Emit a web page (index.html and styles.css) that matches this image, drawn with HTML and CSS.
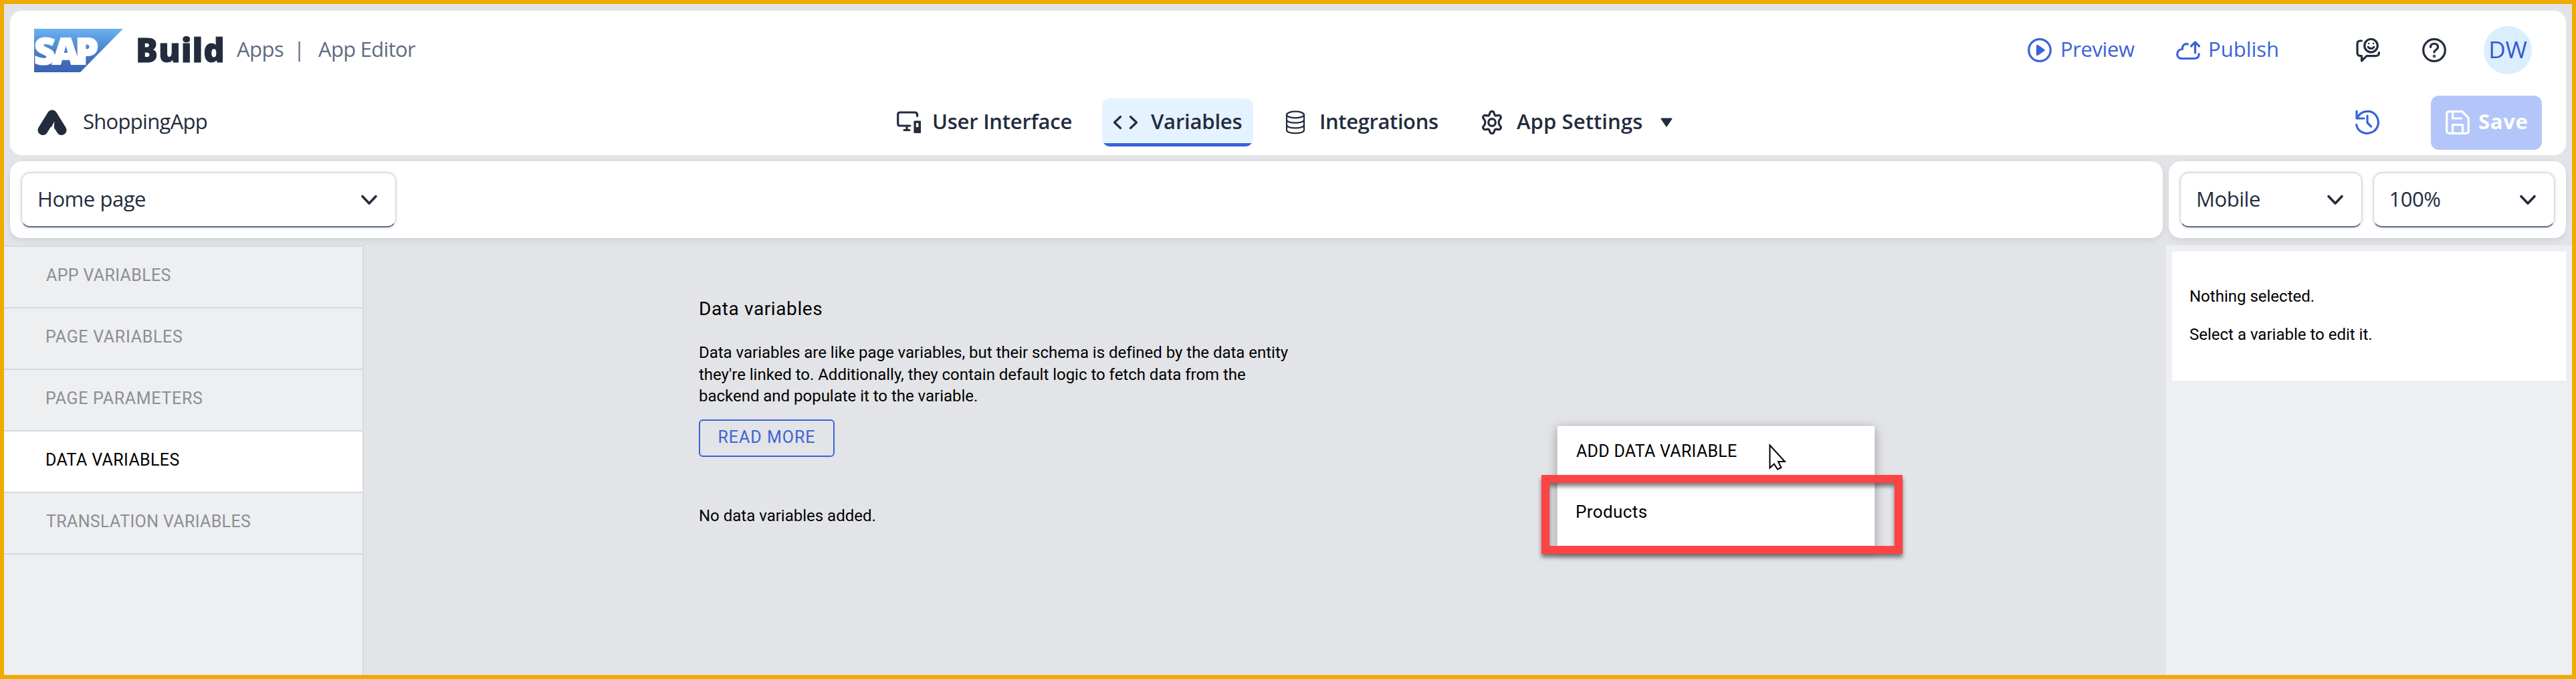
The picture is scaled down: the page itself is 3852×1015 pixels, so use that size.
FILE: index.html
```html
<!DOCTYPE html>
<html lang="en">
<head>
<meta charset="utf-8">
<title>ShoppingApp - App Editor</title>
<link rel="stylesheet" href="styles.css">
</head>
<body>
<div class="app">
  <header class="header">
    <div class="shell-row">
      <svg class="logo" viewBox="0 0 133 65">
        <defs><linearGradient id="sap" x1="0" y1="0" x2="0" y2="1"><stop offset="0" stop-color="#6cb2f2"/><stop offset=".35" stop-color="#5390d8"/><stop offset=".75" stop-color="#426dbb"/><stop offset="1" stop-color="#3c64b4"/></linearGradient></defs>
        <path d="M0 0h133L69 65H0z" fill="url(#sap)"/>
        <text class="logo-text" y="52.5"><tspan x="0">S</tspan><tspan x="27.500">A</tspan><tspan x="61.500">P</tspan></text>
      </svg>
      <span class="product">Build</span>
      <span class="crumb crumb-apps">Apps</span>
      <span class="crumb crumb-sep">|</span>
      <span class="crumb crumb-editor">App Editor</span>
      <div class="shell-actions">
        <a class="link preview">
          <svg class="icon" viewBox="0 0 36 36"><circle cx="18" cy="18" r="16.3"/><path class="solid" d="M14.5 11.5v13l9.5-6.5z"/></svg>
          <span>Preview</span>
        </a>
        <a class="link publish">
          <svg class="icon" viewBox="0 0 36 36"><path d="M17.5 9c-5-1.500-8.500 2-8 7.500C4.500 17 1.700 20 1.700 24s3 6.500 6.500 6.500h19c4.500 0 7-2.500 7-7M28.500 22V7M22.500 12l6-6 6 6"/></svg>
          <span>Publish</span>
        </a>
        <svg class="icon feedback" viewBox="0 0 36 36"><path d="M8.500 4H6.500C3.500 4 2 6 2 8.500v13C2 25 3.500 26.500 6.500 26.500h2V34l7.500-7.300h13c3.500 0 5.500-1.500 5.500-5"/><circle cx="22.500" cy="11.300" r="9.800"/><path d="M18.200 13.200c1.500 3.200 7.100 3.200 8.600 0" class="smile"/><circle class="dot" cx="19" cy="8" r="1.200"/><circle class="dot" cx="26" cy="8" r="1.200"/></svg>
        <svg class="icon help" viewBox="0 0 36 36"><circle cx="18" cy="18" r="16.300"/><path d="M12.500 13.500c0-7 11-7 11 0 0 4-5.500 4-5.500 7.500"/><circle class="solid" cx="18" cy="27" r=".7"/></svg>
        <span class="avatar">DW</span>
      </div>
    </div>
    <div class="app-row">
      <div class="app-name">
        <svg class="app-mark" viewBox="0 0 44 38"><path d="M8 30.500 22 8 36 30.500M22 8l4 13" fill="none" stroke="#232c3d" stroke-width="15" stroke-linecap="round" stroke-linejoin="round"/><path d="M25.500 17.500 15 36l6 2h6l1-2c-3.500-6-3.500-12-2.500-18.500z" fill="#fff"/></svg>
        <span>ShoppingApp</span>
      </div>
      <nav class="tabs">
        <a class="tab tab-ui">
          <svg class="icon" viewBox="0 0 36 36"><path d="M30.500 8.500V6.500C30.500 4 29.500 3 27 3H5C2.800 3 1.700 4 1.700 6v14c0 2 1 3 3 3H20M15 23v6M11 29.500h8"/><path class="solid" d="M27 17h7.500v15.500H27z"/><path d="M28.800 19h3.600v6h-3.600z" fill="#fff" stroke="none"/></svg>
          <span>User Interface</span>
        </a>
        <a class="tab tab-variables active">
          <svg class="icon" viewBox="0 0 36 36"><path d="M10.500 9.500 1.500 18l9 8.500M25.500 9.500l9 8.500-9 8.500"/></svg>
          <span>Variables</span>
        </a>
        <a class="tab tab-integrations">
          <svg class="icon thin" viewBox="0 0 36 36"><ellipse cx="18" cy="6.500" rx="13" ry="4.800"/><path d="M5 6.500v23c0 6.200 26 6.200 26 0v-23M5 14c0 6.200 26 6.200 26 0M5 21.700c0 6.200 26 6.200 26 0"/></svg>
          <span>Integrations</span>
        </a>
        <a class="tab tab-settings">
          <svg class="icon" viewBox="0 0 36 36"><path d="M15.300 3c.8-2 4.600-2 5.400 0l1.200 3.200c.4 1.200 1.700 1.900 3 1.700l3.100-.6c2.300-.4 4.300 2.800 2.900 4.600l-2.100 3c-.8 1.300-.8 4.900 0 6.200l2.100 3c1.400 1.800-.6 5-2.900 4.600l-3.100-.6c-1.300-.2-2.600.5-3 1.700L20.700 33c-.8 2-4.600 2-5.400 0l-1.200-3.200c-.4-1.200-1.700-1.900-3-1.700l-3.100.6c-2.300.4-4.300-2.800-2.900-4.600l2.100-3c.8-1.300.8-4.900 0-6.200l-2.100-3c-1.400-1.800.6-5 2.900-4.600l3.100.6c1.300.2 2.600-.5 3-1.700z"/><circle cx="18" cy="18" r="5.300"/></svg>
          <span>App Settings</span>
          <svg class="caret" viewBox="0 0 18 14"><path d="M1.500 1.500h15L9 12.500z" fill="#232c3d" stroke="#232c3d" stroke-width="2" stroke-linejoin="round"/></svg>
        </a>
      </nav>
      <svg class="icon history" viewBox="0 0 36 36"><path d="M2 1v11h11M2.500 12C8 0 23-2 30.500 7c6 8 5 18-2.500 24C17.500 38 3.500 33 1.700 21.500M18 8v10.500l5.500 5.500"/></svg>
      <button class="save">
        <svg class="icon" viewBox="0 0 36 36"><path d="M6 1.700h18.500L34.300 11.500V30c0 3-1.500 4.300-4.300 4.300H6C3 34.300 1.700 33 1.700 30V6C1.700 3 3 1.700 6 1.700zM10.500 2v10h13M10.500 34V21.500h15V34"/></svg>
        <span>Save</span>
      </button>
    </div>
  </header>

  <div class="toolbars">
    <div class="bar bar-page">
      <div class="select"><span>Home page</span><svg class="chevron" viewBox="0 0 24 16"><path d="M2 2.500 12 13 22 2.500"/></svg></div>
    </div>
    <div class="bar bar-view">
      <div class="select"><span>Mobile</span><svg class="chevron" viewBox="0 0 24 16"><path d="M2 2.500 12 13 22 2.500"/></svg></div>
      <div class="select"><span>100%</span><svg class="chevron" viewBox="0 0 24 16"><path d="M2 2.500 12 13 22 2.500"/></svg></div>
    </div>
  </div>

  <div class="workspace">
    <aside class="sidebar">
      <a class="side-item s-app">APP VARIABLES</a>
      <a class="side-item s-page">PAGE VARIABLES</a>
      <a class="side-item s-params">PAGE PARAMETERS</a>
      <a class="side-item s-data current">DATA VARIABLES</a>
      <a class="side-item s-trans">TRANSLATION VARIABLES</a>
    </aside>
    <main class="content">
      <h1>Data variables</h1>
      <p class="intro">Data variables are like page variables, but their schema is defined by the data entity<br>they're linked to. Additionally, they contain default logic to fetch data from the<br>backend and populate it to the variable.</p>
      <button class="read-more">READ MORE</button>
      <p class="empty">No data variables added.</p>
    </main>
    <aside class="inspector">
      <div class="inspector-card">
        <p>Nothing selected.</p>
        <p>Select a variable to edit it.</p>
      </div>
    </aside>
  </div>

  <div class="menu">
    <div class="menu-title">ADD DATA VARIABLE</div>
    <div class="menu-item">Products</div>
  </div>
  <div class="highlight"></div>
  <svg class="cursor" viewBox="0 0 26 42"><path d="M1.500 2.500v34l6.500-6 5 8 5.500-2.500-4.500-9h10z" fill="#fff" stroke="#000" stroke-width="2"/></svg>
</div>
</body>
</html>
```

FILE: styles.css
```css
* { box-sizing: border-box; }

body {
  margin: 0;
  font-family: Roboto, "Liberation Sans", sans-serif;
  font-size: 24px;
  color: #000;
}

.app {
  position: relative;
  display: flex;
  flex-direction: column;
  width: 3852px;
  height: 1015px;
  padding-top: 10px;
  border: 6px solid #f0ab00;
  background: #e3e4e8;
  overflow: hidden;
  white-space: nowrap;
}

/* Header */
.header {
  flex: none;
  height: 216px;
  margin: 0 9px;
  border-radius: 18px;
  background: #fff;
  font-family: "Open Sans", "Liberation Sans", sans-serif;
  font-size: 31px;
  line-height: 42px;
  color: #232c3d;
}

.shell-row {
  display: flex;
  align-items: center;
  height: 118px;
  padding: 0 51px 0 36px;
}

.logo { width: 133px; height: 65px; overflow: visible; }
.logo-text {
  font-size: 55px;
  font-weight: 800;
  fill: #fff;
  stroke: #fff;
  stroke-width: 2px;
}
.product {
  width: 149px;
  margin-left: 19px;
  padding-bottom: 3px;
  font-size: 49px;
  font-weight: 800;
  letter-spacing: .9px;
  -webkit-text-stroke: 1px #232c3d;
}
.crumb { padding-bottom: 4px; color: #5f6b80; }
.crumb-apps { width: 88px; margin-left: 2px; letter-spacing: -.5px; }
.crumb-sep { width: 34px; padding-left: 0; margin-left: -3px; margin-right: 3px; }
.crumb-editor { letter-spacing: -.7px; }

.shell-actions { display: flex; align-items: center; margin-left: auto; }
.link { display: flex; align-items: center; color: #3a63d8; }
.link span { padding-bottom: 4px; }
.preview { width: 222px; gap: 13px; letter-spacing: -.4px; }
.publish { width: 269px; gap: 12px; }
.help { margin-left: 63px; }
.avatar {
  width: 72px;
  height: 72px;
  margin-left: 56px;
  border-radius: 50%;
  background: #dbeefe;
  color: #3558cf;
  font-size: 35px;
  line-height: 70px;
  text-align: center;
}

.icon {
  flex: none;
  width: 36px;
  height: 36px;
  fill: none;
  stroke: currentColor;
  stroke-width: 3.2;
  stroke-linecap: round;
  stroke-linejoin: round;
}
.icon .solid { fill: currentColor; }
.icon .dot { fill: currentColor; stroke: none; }
.icon .smile { stroke-width: 3; }
.icon.thin { stroke-width: 2.2; }

.app-row {
  display: flex;
  align-items: center;
  height: 98px;
  padding: 0 36px 0 41px;
}
.app-name { display: flex; align-items: center; width: 1268px; letter-spacing: -.7px; }
.app-name span { margin-left: 24px; padding-bottom: 4px; }
.app-mark { width: 44px; height: 38px; }

.tabs { display: flex; gap: 28px; height: 72px; }
.tab {
  display: flex;
  align-items: center;
  gap: 16px;
  padding: 0 17px;
  border-radius: 12px;
  font-weight: 600;
}
.tab span { padding-bottom: 4px; }
.tab-ui { width: 296px; gap: 17px; letter-spacing: -.25px; }
.tab-variables { width: 226px; gap: 20px; letter-spacing: -.2px; }
.tab-integrations { width: 266px; gap: 18px; letter-spacing: -.4px; }
.tab-settings { gap: 19px; letter-spacing: .1px; }
.tab.active {
  background: linear-gradient(#e5f2ff 67px, #3a63d8 67px);
}
.caret { width: 18px; height: 14px; margin-left: 8px; }

.history { margin-left: auto; color: #3a63d8; }
.save {
  display: flex;
  align-items: center;
  gap: 13px;
  width: 166px;
  height: 81px;
  margin-left: 77px;
  padding: 0 0 0 22px;
  border: 0;
  border-radius: 12px;
  background: #b4c6f9;
  color: #fff;
  font: 700 31px/42px "Open Sans", "Liberation Sans", sans-serif;
  letter-spacing: .7px;
}
.save span { padding-bottom: 4px; }

/* Toolbars */
.toolbars {
  display: flex;
  flex: none;
  gap: 9px;
  margin: 9px 9px 0;
}
.bar {
  display: flex;
  height: 115px;
  padding: 17px;
  border-radius: 18px;
  background: #fff;
  box-shadow: 0 1px 1px #d3d5d7, 0 4px 10px rgba(0, 0, 0, .07);
}
.bar-page { width: 3219px; }
.bar-view { width: 594px; gap: 17px; }
.select {
  display: flex;
  align-items: center;
  justify-content: space-between;
  width: 560px;
  height: 82px;
  padding: 0 27px 0 23px;
  border: 1px solid #cfd5de;
  border-bottom: 2px solid #5b6b84;
  border-radius: 13px;
  box-shadow: 0 0 4px rgba(91, 107, 132, .35);
  font-family: "Open Sans", "Liberation Sans", sans-serif;
  font-size: 31px;
  letter-spacing: -.45px;
  line-height: 42px;
  color: #232c3d;
}
.select span { padding-bottom: 3px; }
.bar-view .select { width: 272px; }
.chevron {
  width: 24px;
  height: 16px;
  fill: none;
  stroke: #232c3d;
  stroke-width: 3.6;
  stroke-linecap: round;
  stroke-linejoin: round;
}

/* Workspace */
.workspace { display: flex; flex: 1; margin-top: 11px; }
.sidebar {
  width: 538px;
  border-top: 2px solid #d8d9dd;
  border-right: 2px solid #d8d9dd;
  background: #eeeff1;
}
.side-item {
  display: block;
  height: 92px;
  padding: 0 0 3px 62px;
  border-bottom: 2px solid #d8d9dd;
  font-size: 25px;
  line-height: 86px;
  color: #8b8e95;
}
.s-app { padding-left: 63px; letter-spacing: .35px; }
.s-page { letter-spacing: .69px; }
.s-params { letter-spacing: .67px; }
.s-data { letter-spacing: .37px; }
.s-trans { padding-left: 63px; letter-spacing: .35px; }
.side-item.current { background: #fff; color: #000; }

.content { flex: 1; padding: 75px 0 0 501px; }
h1 {
  margin: 0;
  font-size: 28px;
  font-weight: 400;
  letter-spacing: .6px;
  line-height: 40px;
}
.intro { margin: 29px 0 0; letter-spacing: -.02px; line-height: 32.5px; }
.read-more {
  display: block;
  width: 203px;
  height: 56px;
  margin: 18px 0 0;
  padding: 0 0 2px;
  border: 2px solid #3a63d8;
  border-radius: 6px;
  background: none;
  color: #3f63cf;
  font: 25px/50px Roboto, "Liberation Sans", sans-serif;
  letter-spacing: 1px;
}
.empty { margin: 72px 0 0; line-height: 32px; }

.inspector { width: 607px; padding: 9px; background: #eeeff1; }
.inspector-card {
  height: 193px;
  padding: 51px 0 0 26px;
  background: #fff;
  line-height: 32px;
}
.inspector-card p { margin: 0 0 25px; }

/* Popup menu over the canvas */
.menu {
  position: absolute;
  left: 2323px;
  top: 631px;
  width: 474px;
  height: 182px;
  border-radius: 2px;
  background: #fff;
  box-shadow: 0 0 0 1px #d6d7da, 0 4px 16px rgba(0, 0, 0, .38);
}
.menu-title {
  padding: 22px 28px 0;
  line-height: 32px;
  font-size: 25px;
  letter-spacing: .27px;
}
.menu-item {
  padding: 58px 27px 0;
  line-height: 32px;
  font-size: 26px;
  letter-spacing: .4px;
}
.highlight {
  position: absolute;
  left: 2299px;
  top: 704px;
  width: 540px;
  height: 118px;
  border: 12px solid #fd4343;
  filter: drop-shadow(0 5px 3px rgba(0, 0, 0, .5));
}
.cursor {
  position: absolute;
  left: 2639px;
  top: 657px;
  width: 26px;
  height: 42px;
}
```
